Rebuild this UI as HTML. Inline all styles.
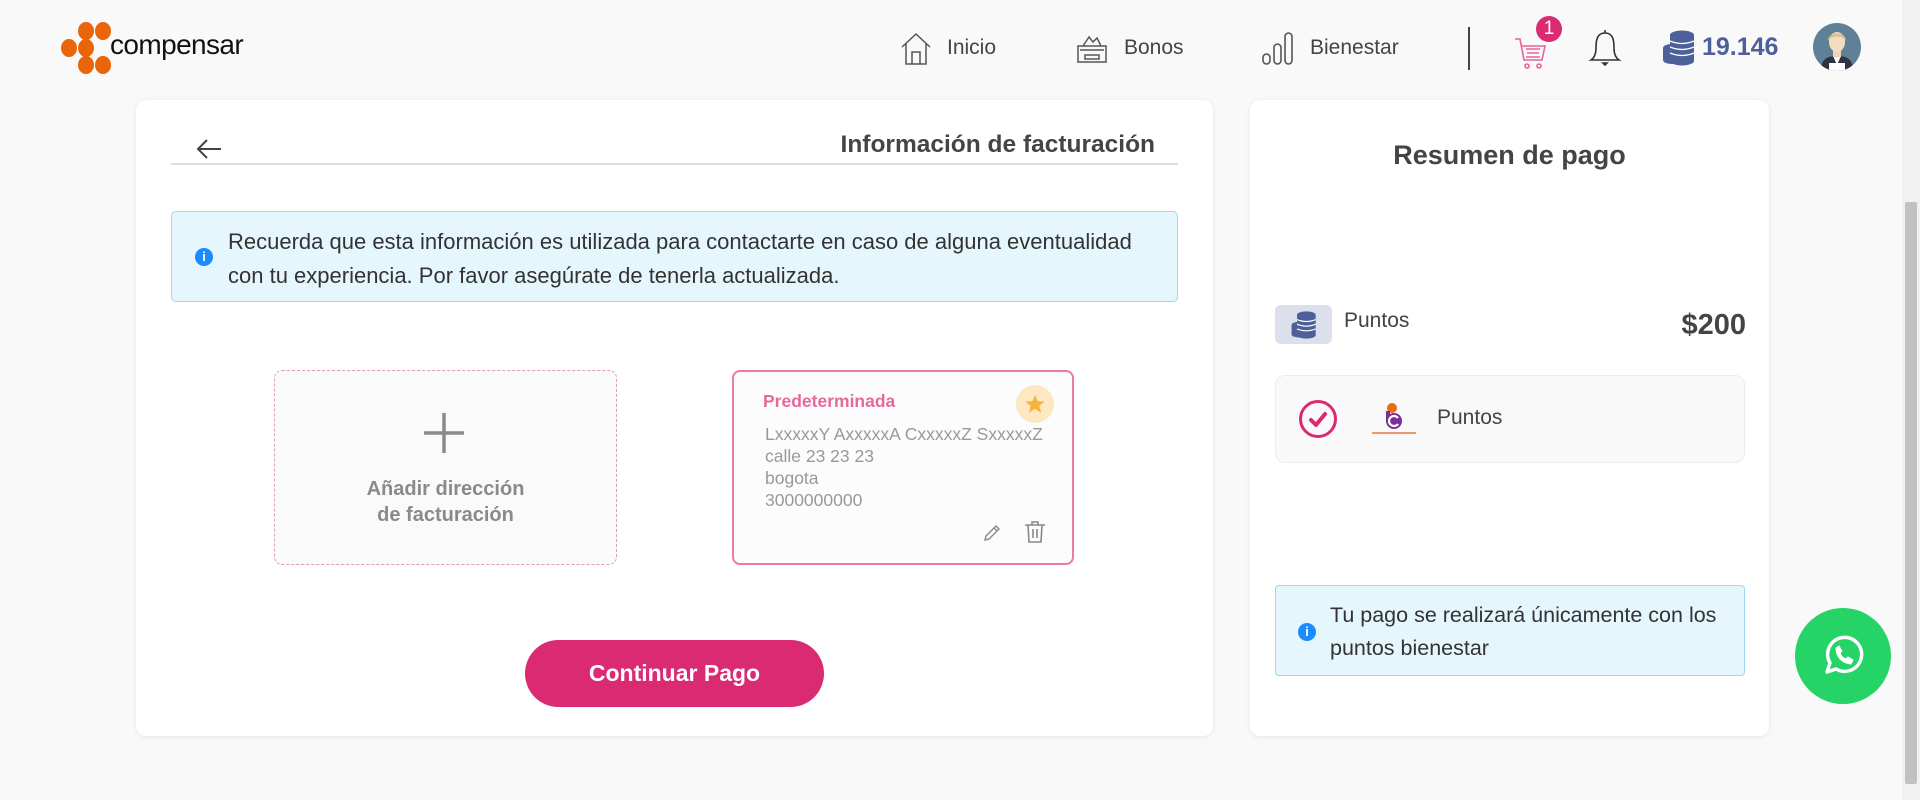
<!DOCTYPE html>
<html><head><meta charset="utf-8"><style>
*{box-sizing:border-box;margin:0;padding:0}
body{width:1920px;height:800px;background:#f9f9f9;font-family:"Liberation Sans",sans-serif;position:relative;overflow:hidden;color:#444}
.a{position:absolute}
.card{position:absolute;background:#fff;border-radius:10px;box-shadow:0 1px 6px rgba(0,0,0,.08)}
.nav{font-size:21px;color:#444;top:36px}
</style></head><body>
<!-- logo -->
<svg class="a" style="left:61px;top:22px" width="52" height="52" viewBox="0 0 52 52">
<g fill="#e8650a"><ellipse cx="25" cy="9" rx="8" ry="9"/><ellipse cx="42" cy="9" rx="8" ry="9"/><ellipse cx="8" cy="26" rx="8" ry="9"/><ellipse cx="25" cy="26" rx="8" ry="9"/><ellipse cx="25" cy="43" rx="8" ry="9"/><ellipse cx="42" cy="43" rx="8" ry="9"/></g></svg>
<div class="a" style="left:110px;top:29px;font-size:28px;color:#111;letter-spacing:-0.6px">compensar</div>
<!-- nav -->
<svg class="a" style="left:900px;top:32px" width="32" height="34" viewBox="0 0 32 34" fill="none" stroke="#555" stroke-width="1.5"><path d="M2 15 L16 2 L30 15 M6 12 V32 H26 V12 M12 32 V20 H20 V32"/></svg>
<div class="a nav" style="left:947px">Inicio</div>
<svg class="a" style="left:1075px;top:34px" width="34" height="32" viewBox="0 0 34 32" fill="none" stroke="#555" stroke-width="1.5"><path d="M8 12 L14 3 L18 8 L22 4 L26 12 M3 12 H31 V28 H3 Z M5 16 H29 M10 21 H24 V25 H10 Z"/></svg>
<div class="a nav" style="left:1124px">Bonos</div>
<svg class="a" style="left:1261px;top:30px" width="34" height="36" viewBox="0 0 34 36" fill="none" stroke="#555" stroke-width="1.6"><rect x="2" y="24" width="7" height="10" rx="3.5"/><rect x="13" y="14" width="7" height="20" rx="3.5"/><rect x="24" y="3" width="7" height="31" rx="3.5"/></svg>
<div class="a nav" style="left:1310px">Bienestar</div>
<div class="a" style="left:1468px;top:27px;width:1.5px;height:43px;background:#444"></div>
<svg class="a" style="left:1514px;top:36px" width="34" height="34" viewBox="0 0 34 34" fill="none" stroke="#e6649a" stroke-width="1.6"><path d="M1 3 H6 L10 24 H28 L31 10 H8 M12 13 H26 M13 17 H25 M12 21 H26"/><circle cx="13" cy="30" r="2"/><circle cx="25" cy="30" r="2"/></svg>
<div class="a" style="left:1536px;top:16px;width:26px;height:26px;border-radius:50%;background:#d92a72;color:#fff;font-size:19px;text-align:center;line-height:26px">1</div>
<svg class="a" style="left:1588px;top:28px" width="34" height="40" viewBox="0 0 34 40" fill="none" stroke="#333" stroke-width="1.6"><path d="M17 2 V5 M17 5 C9 5 8 12 8 20 C8 27 6 30 3 32 H31 C28 30 26 27 26 20 C26 12 25 5 17 5 Z"/><path d="M15 35 H19 L17 37 Z" fill="#333"/></svg>
<svg class="a" style="left:1662px;top:30px" width="34" height="36" viewBox="0 0 34 36" fill="#4e609a"><ellipse cx="20" cy="5" rx="12" ry="4.5"/><rect x="8" y="5" width="24" height="26"/><ellipse cx="20" cy="31" rx="12" ry="4.5"/><ellipse cx="10" cy="18" rx="9" ry="4"/><rect x="1" y="18" width="10" height="12"/><ellipse cx="10" cy="30" rx="9" ry="4"/><g stroke="#fff" stroke-width="1.3" fill="none"><path d="M8 11 Q20 16 32 11 M8 17 Q20 22 32 17 M8 23 Q20 28 32 23"/></g></svg>
<div class="a" style="left:1702px;top:33px;font-size:25px;color:#4e609a;font-weight:bold">19.146</div>
<svg class="a" style="left:1813px;top:23px" width="48" height="48" viewBox="0 0 48 48"><defs><clipPath id="c"><circle cx="24" cy="24" r="24"/></clipPath></defs><circle cx="24" cy="24" r="24" fill="#5e8197"/><g clip-path="url(#c)"><path d="M8 48 C8 36 14 33 24 33 C34 33 40 36 40 48Z" fill="#2d3440"/><path d="M20 33 L24 42 L28 33Z" fill="#fff"/><rect x="20" y="26" width="8" height="8" fill="#f2d3b3"/><ellipse cx="24" cy="19" rx="8" ry="10" fill="#f5dcc0"/><path d="M15 18 C15 8 33 8 33 18 C31 12 18 12 15 18Z" fill="#d9c08f"/><rect x="16" y="40" width="16" height="10" fill="#fff"/></g></svg>
<!-- left card -->
<div class="card" style="left:136px;top:100px;width:1077px;height:636px"></div>
<svg class="a" style="left:195px;top:137px" width="28" height="24" viewBox="0 0 28 24" fill="none" stroke="#444" stroke-width="2"><path d="M26 12 H3 M12 3 L3 12 L12 21"/></svg>
<div class="a" style="left:700px;top:131px;width:455px;text-align:right;font-size:24.5px;font-weight:bold;color:#444">Información de facturación</div>
<div class="a" style="left:171px;top:163px;width:1007px;height:2px;background:#dcdce0"></div>
<div class="a" style="left:171px;top:211px;width:1007px;height:91px;background:#e5f6fd;border:1px solid #9dd7f5;border-radius:5px"></div>
<div class="a" style="left:195px;top:248px;width:18px;height:18px;border-radius:50%;background:#1a8cff;color:#fff;font-size:13px;font-weight:bold;text-align:center;line-height:18px">i</div>
<div class="a" style="left:228px;top:225px;font-size:22px;line-height:34px;color:#333">Recuerda que esta información es utilizada para contactarte en caso de alguna eventualidad<br>con tu experiencia. Por favor asegúrate de tenerla actualizada.</div>
<div class="a" style="left:274px;top:370px;width:343px;height:195px;border:1px dashed #e59ab5;border-radius:8px;background:#fafafa"></div>
<svg class="a" style="left:422px;top:411px" width="44" height="44" viewBox="0 0 44 44" stroke="#8a8a8a" stroke-width="3.5"><path d="M22 2 V42 M2 22 H42"/></svg>
<div class="a" style="left:274px;top:476px;width:343px;text-align:center;font-size:20px;line-height:26px;color:#8a8a8a;font-weight:bold">Añadir dirección<br>de facturación</div>
<div class="a" style="left:732px;top:370px;width:342px;height:195px;border:2.5px solid #ea7aa7;border-radius:8px;background:#fcfcfc"></div>
<div class="a" style="left:763px;top:391px;font-size:17.5px;font-weight:bold;color:#e56a9c">Predeterminada</div>
<div class="a" style="left:1016px;top:385px;width:38px;height:38px;border-radius:50%;background:#fde8c2"></div>
<svg class="a" style="left:1024px;top:393px" width="22" height="22" viewBox="0 0 24 24"><path d="M12 2 L15 9 L22.5 9.3 L16.7 14 L18.7 21.5 L12 17.3 L5.3 21.5 L7.3 14 L1.5 9.3 L9 9 Z" fill="#f5b43d"/></svg>
<div class="a" style="left:765px;top:423px;font-size:17.5px;line-height:22px;color:#999">LxxxxxY AxxxxxA CxxxxxZ SxxxxxZ<br>calle 23 23 23<br>bogota<br>3000000000</div>
<svg class="a" style="left:982px;top:523px" width="20" height="20" viewBox="0 0 20 20" fill="none" stroke="#888" stroke-width="1.4"><path d="M3 17 L4 13 L14 3 L17 6 L7 16 Z M12 5 L15 8"/></svg>
<svg class="a" style="left:1024px;top:520px" width="22" height="24" viewBox="0 0 22 24" fill="none" stroke="#888" stroke-width="1.6"><path d="M1 5 H21 M8 5 V2 H14 V5 M4 5 L5 22 H17 L18 5 M9 9 V18 M13 9 V18"/></svg>
<div class="a" style="left:525px;top:640px;width:299px;height:67px;border-radius:34px;background:#d92a72;color:#fff;font-size:23px;font-weight:bold;text-align:center;line-height:67px">Continuar Pago</div>
<!-- right card -->
<div class="card" style="left:1250px;top:100px;width:519px;height:636px"></div>
<div class="a" style="left:1250px;top:140px;width:519px;text-align:center;font-size:27px;font-weight:bold;color:#444">Resumen de pago</div>
<div class="a" style="left:1275px;top:305px;width:57px;height:39px;border-radius:6px;background:#dce0ec"></div>
<svg class="a" style="left:1290px;top:311px" width="28" height="28" viewBox="0 0 34 36" fill="#4e609a"><ellipse cx="20" cy="5" rx="12" ry="4.5"/><rect x="8" y="5" width="24" height="26"/><ellipse cx="20" cy="31" rx="12" ry="4.5"/><ellipse cx="10" cy="18" rx="9" ry="4"/><rect x="1" y="18" width="10" height="12"/><ellipse cx="10" cy="30" rx="9" ry="4"/><g stroke="#fff" stroke-width="1.5" fill="none"><path d="M8 11 Q20 16 32 11 M8 17 Q20 22 32 17 M8 23 Q20 28 32 23"/></g></svg>
<div class="a" style="left:1344px;top:309px;font-size:21px;color:#444">Puntos</div>
<div class="a" style="left:1600px;top:309px;width:146px;text-align:right;font-size:29px;font-weight:bold;color:#444">$200</div>
<div class="a" style="left:1275px;top:375px;width:470px;height:88px;border-radius:10px;background:#f9f9f9;border:1px solid #ececec"></div>
<svg class="a" style="left:1298px;top:399px" width="40" height="40" viewBox="0 0 40 40" fill="none" stroke="#d92a72"><circle cx="20" cy="20" r="17.5" stroke-width="3"/><path d="M13 21 L18 26 L27 15" stroke-width="4" stroke-linecap="round" stroke-linejoin="round"/></svg>
<svg class="a" style="left:1371px;top:403px" width="46" height="34" viewBox="0 0 46 34"><circle cx="21" cy="5" r="5" fill="#ea6a12"/><circle cx="23" cy="18" r="8" fill="#7a2d9a"/><rect x="15" y="8" width="4" height="10" fill="#7a2d9a"/><path d="M27 15 A5 5 0 1 0 27 21" stroke="#fff" stroke-width="2.2" fill="none"/><rect x="1" y="29" width="44" height="2" fill="#e89a6a"/></svg>
<div class="a" style="left:1437px;top:406px;font-size:21px;color:#444">Puntos</div>
<div class="a" style="left:1275px;top:585px;width:470px;height:91px;background:#e5f6fd;border:1px solid #9dd7f5;border-radius:4px"></div>
<div class="a" style="left:1298px;top:623px;width:18px;height:18px;border-radius:50%;background:#1a8cff;color:#fff;font-size:13px;font-weight:bold;text-align:center;line-height:18px">i</div>
<div class="a" style="left:1330px;top:599px;font-size:21.5px;line-height:33px;color:#333">Tu pago se realizará únicamente con los<br>puntos bienestar</div>
<!-- whatsapp -->
<div class="a" style="left:1795px;top:608px;width:96px;height:96px;border-radius:50%;background:#25d366"></div>
<svg class="a" style="left:1818px;top:631px" width="50" height="50" viewBox="0 0 50 50" fill="none" stroke="#fff" stroke-width="3.5"><path d="M9 41 L12 32 A17 17 0 1 1 18 38 Z" stroke-linejoin="round"/><path d="M18 17 C18 26 24 32 33 33 L35 29 L30 26 L28 28 C25 27 23 25 22 22 L24 20 L21 15 Z" fill="#fff" stroke-width="1"/></svg>
<!-- scrollbar -->
<div class="a" style="left:1902px;top:0;width:18px;height:800px;background:#f1f1f1"></div>
<div class="a" style="left:1905px;top:202px;width:12px;height:582px;background:#c1c1c1;border-radius:2px"></div>
</body></html>
